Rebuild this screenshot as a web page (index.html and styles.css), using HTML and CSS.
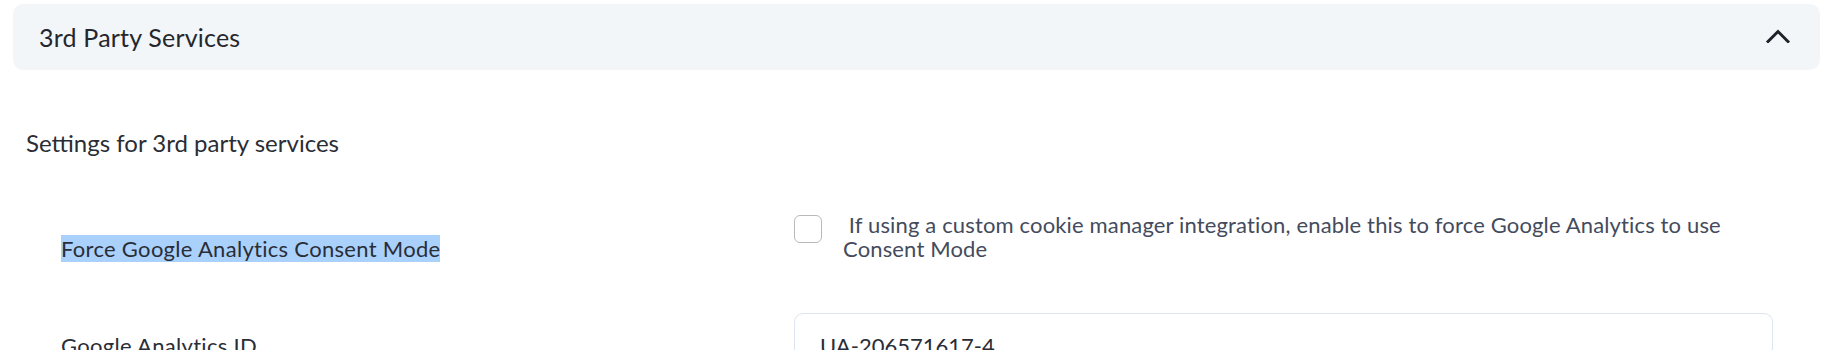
FILE: index.html
```html
<!DOCTYPE html>
<html lang="en">
<head>
<meta charset="utf-8">
<title>3rd Party Services</title>
<link rel="stylesheet" href="styles.css">
</head>
<body>
<div class="panel">
  <div class="panel-header">
    <span class="panel-title">3rd Party Services</span>
    <svg class="chevron" width="24" height="14" viewBox="0 0 24 14" aria-hidden="true">
      <path d="M2 12.5 L12 2.5 L22 12.5" fill="none" stroke="#1f2329" stroke-width="3" stroke-linecap="square" stroke-linejoin="miter"/>
    </svg>
  </div>
  <div class="panel-body">
    <p class="section-desc">Settings for 3rd party services</p>
    <div class="form-row row-check">
      <div class="label"><span class="selected">Force Google Analytics Consent Mode</span></div>
      <div class="control check-control">
        <span class="checkbox"></span>
        <span class="help">&nbsp;If using a custom cookie manager integration, enable this to force Google Analytics to use Consent Mode</span>
      </div>
    </div>
    <div class="form-row row-input">
      <div class="label">Google Analytics ID</div>
      <div class="control">
        <div class="text-input">UA-206571617-4</div>
      </div>
    </div>
  </div>
</div>
</body>
</html>
```

FILE: styles.css
```css
html, body {
  margin: 0;
  padding: 0;
  background: #ffffff;
}
body {
  font-family: "Lato", "Open Sans", sans-serif;
  color: #2a2d34;
}
.panel {
  padding: 4px 6px 0 13px;
}
.panel-header {
  display: flex;
  align-items: center;
  justify-content: space-between;
  height: 66px;
  background: #f3f6f9;
  border-radius: 10px;
  padding: 0 30px 0 26px;
}
.panel-title {
  font-size: 25px;
  letter-spacing: 0.2px;
  color: #25272c;
}
.chevron {
  display: block;
  margin-top: -2px;
}
.section-desc {
  margin: 0;
  padding: 57px 0 0 13px;
  font-size: 24px;
  line-height: 32px;
  color: #2a2d34;
}
.form-row {
  display: grid;
  grid-template-columns: 733px 979px;
  padding-left: 48px;
}
.row-check {
  margin-top: 54px;
}
.row-check .label {
  padding-top: 22px;
}
.label {
  font-size: 22px;
  line-height: 27px;
  letter-spacing: 0.3px;
  color: #2a2d36;
}
.selected {
  background: #a9d1fc;
}
.check-control {
  display: flex;
  align-items: flex-start;
  gap: 21px;
}
.checkbox {
  flex: none;
  box-sizing: border-box;
  width: 28px;
  height: 28px;
  margin-top: 1.5px;
  border: 1.5px solid #b9b9b9;
  border-radius: 6px;
  background: #ffffff;
}
.help {
  font-size: 22px;
  line-height: 24px;
  letter-spacing: 0.15px;
  color: #444b5c;
}
.row-input {
  margin-top: 51px;
}
.row-input .label {
  padding-top: 19px;
}
.text-input {
  box-sizing: border-box;
  height: 64px;
  border: 1px solid #dde5ee;
  border-radius: 9px;
  padding: 19px 25px 0;
  font-size: 22px;
  line-height: 26px;
  color: #2a2d36;
}
```
